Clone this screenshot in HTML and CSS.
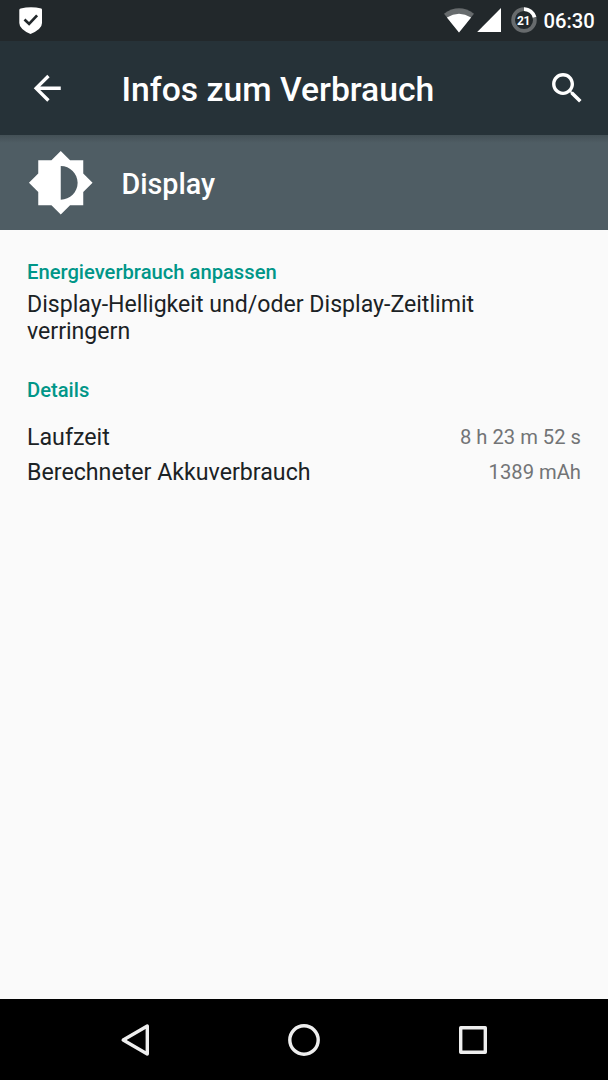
FILE: index.html
```html
<!DOCTYPE html>
<html lang="de">
<head>
<meta charset="utf-8">
<title>Infos zum Verbrauch</title>
<link rel="stylesheet" href="styles.css">
</head>
<body>
<div class="screen">
  <div class="status-bar">
    <svg class="shield" width="24" height="28" viewBox="0 0 24 28"><path d="M.3 3Q.3 1.6 1.7 1.4Q12-.9 22.3 1.4Q23 1.7 23 3V16Q23 19.5 20 22Q16.500 25 11.500 27Q6.500 25 3.300 22Q.3 19.500.3 16Z" fill="#fff"/><path d="M5.500 12.500l4.600 4.400 8-8.500" fill="none" stroke="#22282b" stroke-width="2.700"/></svg>
    <div class="status-right">
      <svg class="wifi" width="30" height="25" viewBox="0 0 30 25"><path d="M15 24.500L0 5.700Q15-5.200 30 5.700Z" fill="#676b6d"/><path d="M15 24.500L2.900 9.400Q15 2 27.100 9.400Z" fill="#fff"/></svg>
      <svg class="signal" width="25" height="24" viewBox="0 0 25 24"><path d="M.2 24L24 0V24Z" fill="#fff"/></svg>
      <div class="battery">
        <svg width="26" height="26" viewBox="0 0 26 26"><circle cx="13" cy="13" r="10.900" fill="none" stroke="#676b6d" stroke-width="3.700"/><path d="M13 2.100A10.900 10.900 0 0 1 23.600 10.300" fill="none" stroke="#fff" stroke-width="3.700"/></svg>
        <span class="battery-level">21</span>
      </div>
      <span class="clock">06:30</span>
    </div>
  </div>
  <header class="toolbar">
    <svg class="tool-icon" viewBox="0 0 24 24"><path d="M20 11H7.830l5.590-5.590L12 4l-8 8 8 8 1.410-1.410L7.830 13H20v-2z"/></svg>
    <h1 class="title">Infos zum Verbrauch</h1>
    <svg class="tool-icon" viewBox="0 0 24 24"><path d="M15.500 14h-.79l-.28-.27C15.410 12.590 16 11.110 16 9.500 16 5.910 13.090 3 9.500 3S3 5.910 3 9.500 5.910 16 9.500 16c1.610 0 3.090-.59 4.230-1.570l.27.28v.79l5 4.990L20.490 19l-4.990-5zm-6 0C7.010 14 5 11.990 5 9.500S7.010 5 9.500 5 14 7.010 14 9.500 11.990 14 9.500 14z"/></svg>
  </header>
  <div class="entry">
    <svg class="entry-icon" viewBox="0 0 24 24"><path d="M20 15.310L23.310 12 20 8.690V4h-4.690L12 .69 8.690 4H4v4.690L.69 12 4 15.310V20h4.690L12 23.310 15.310 20H20v-4.690zM12 18V6c3.310 0 6 2.690 6 6s-2.690 6-6 6z"/></svg>
    <h2 class="entry-title">Display</h2>
  </div>
  <main class="content">
    <h3 class="section">Energieverbrauch anpassen</h3>
    <p class="advice">Display-Helligkeit und/oder Display-Zeitlimit verringern</p>
    <h3 class="section">Details</h3>
    <dl class="details">
      <div class="row"><dt>Laufzeit</dt><dd>8 h 23 m 52 s</dd></div>
      <div class="row"><dt>Berechneter Akkuverbrauch</dt><dd>1389 mAh</dd></div>
    </dl>
  </main>
  <nav class="nav-bar">
    <svg width="34" height="34" viewBox="0 0 34 34"><path d="M5.200 17L29.300 3V31Z"/></svg>
    <svg width="34" height="34" viewBox="0 0 34 34"><circle cx="17" cy="17" r="14.200"/></svg>
    <svg width="34" height="34" viewBox="0 0 34 34"><rect x="4.700" y="4.700" width="24.600" height="24.600"/></svg>
  </nav>
</div>
</body>
</html>
```
FILE: styles.css
```css
* { box-sizing: border-box; }
body { margin: 0; font-family: Roboto, "Noto Sans", sans-serif; }
h1, h2, h3, p, dl, dd { margin: 0; font-weight: 500; }
svg { display: block; flex: none; }
.screen { width: 608px; height: 1080px; display: flex; flex-direction: column; background: #fafafa; overflow: hidden; }
.status-bar { flex: none; height: 41px; display: flex; justify-content: space-between; align-items: flex-start; padding: 7px 13px 0 19px; background: #22282b; color: #fff; }
.status-right { display: flex; align-items: flex-start; }
.wifi { margin-top: 1px; }
.signal { margin: 1px 0 0 3px; }
.battery { position: relative; margin-left: 8.500px; }
.battery-level { position: absolute; inset: 0; text-align: center; font-size: 12px; font-weight: 700; letter-spacing: -0.4px; line-height: 28px; }
.clock { width: 51.500px; margin-left: 7px; font-size: 20.200px; font-weight: 500; line-height: 29px; white-space: nowrap; }
.toolbar { flex: none; height: 94px; display: flex; align-items: center; padding: 0 20.500px 0 27px; background: #263238; color: #fff; }
.tool-icon { width: 40.500px; height: 40.500px; fill: #fff; }
.title { flex: 1; margin-left: 54px; font-size: 33.700px; line-height: 40px; padding-top: 3px; }
.entry { flex: none; height: 94.500px; display: flex; align-items: center; padding-left: 27px; background: linear-gradient(#435056, #4f5d64 8px); color: #fff; }
.entry-icon { width: 67.500px; height: 67.500px; fill: #fff; }
.entry-title { margin-left: 27px; font-size: 28.700px; line-height: 34px; padding-top: 2.500px; }
.content { flex: 1; padding: 30px 27px 0; }
.section { color: #009688; font-size: 20.200px; line-height: 24px; }
.advice { margin: 7.500px 0 32.500px; font-size: 23.120px; line-height: 27px; font-weight: 400; color: #1b2225; }
.details { margin-top: 17px; }
.row { display: flex; justify-content: space-between; align-items: center; height: 35px; }
.row dt { padding-top: 1.500px; font-size: 23.200px; font-weight: 400; line-height: 28px; color: #1b2225; }
.row dd { padding-top: 1px; font-size: 20.200px; line-height: 24px; font-weight: 400; color: #727476; }
.nav-bar { flex: none; height: 81px; display: flex; justify-content: center; align-items: center; gap: 135px; background: #000; }
.nav-bar svg { fill: none; stroke: #eee; stroke-width: 3.400; stroke-linejoin: round; }
```
